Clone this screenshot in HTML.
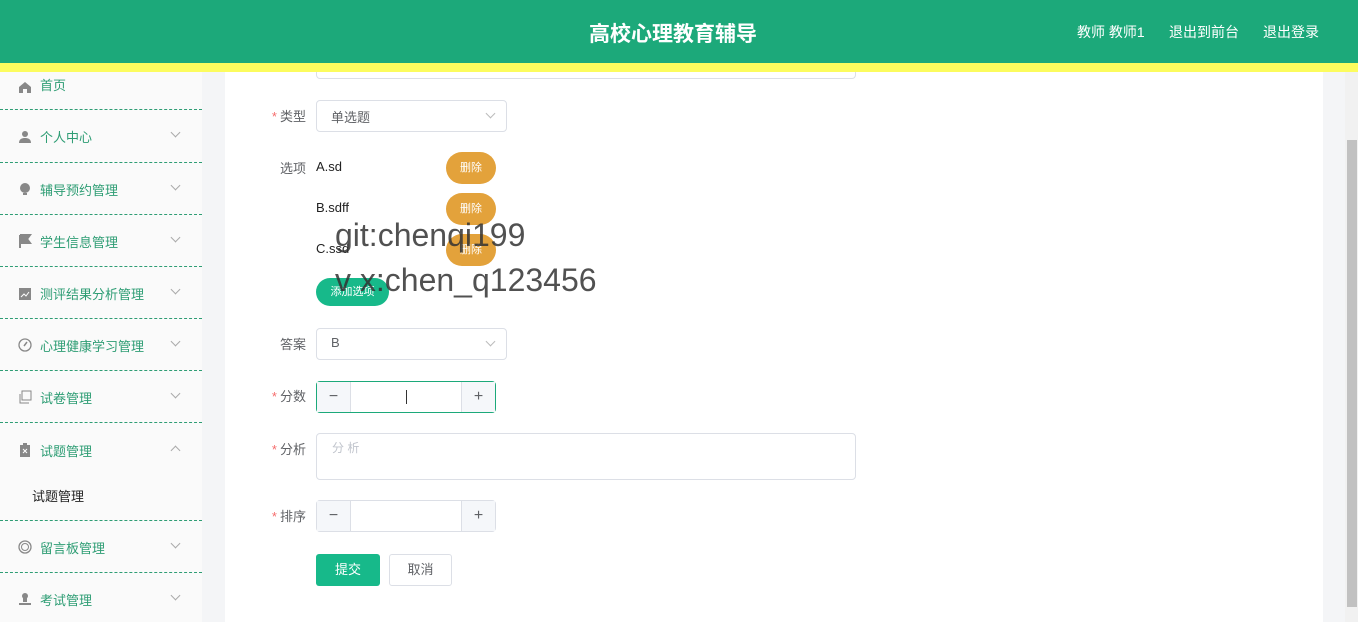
<!DOCTYPE html>
<html><head><meta charset="utf-8"><style>
*{margin:0;padding:0;box-sizing:border-box}
body{width:1358px;height:622px;overflow:hidden;position:relative;font-family:"Liberation Sans","Noto Sans CJK SC",sans-serif;background:#f4f5f7;font-size:13px}
.hdr{position:absolute;left:0;top:0;width:1358px;height:63px;background:#1ca97a}
.yl{position:absolute;left:0;top:63px;width:1358px;height:9px;background:#fcfc5e}
.title{position:absolute;left:-6px;width:1358px;top:18px;text-align:center;color:#fff;font-size:21px;font-weight:bold}
.hr{position:absolute;top:22px;color:#fff;font-size:14px}
.side{position:absolute;left:0;top:72px;width:202px;height:550px;background:#fafafa}
.it{position:absolute;left:0;width:202px;color:#2e9d74;font-size:13px}
.it .ic{position:absolute;left:18px;width:14px;height:14px}
.it .tx{position:absolute;left:40px}
.it .ar{position:absolute;left:172px;width:7px;height:7px;border-right:1px solid #aaa;border-bottom:1px solid #aaa;transform:rotate(45deg)}
.dl{position:absolute;left:0;width:202px;border-top:1px dashed #2e9d74}
.main{position:absolute;left:225px;top:72px;width:1098px;height:550px;background:#fff}
.sb{position:absolute;left:1345px;top:72px;width:13px;height:550px;background:#f1f1f1}
.th{position:absolute;left:1347px;top:140px;width:10px;height:467px;background:#c1c1c1}
.lb{position:absolute;color:#606266;font-size:13px;text-align:right;width:60px}
.lb b{color:#f56c6c;font-weight:normal;margin-right:3px}
.box{position:absolute;border:1px solid #dcdfe6;border-radius:4px;background:#fff;color:#606266}
.btn{position:absolute;border-radius:16px;color:#fff;font-size:11px;text-align:center}
.wm{position:absolute;color:#333;font-size:32px;opacity:.85}
</style></head><body>
<div class="hdr"></div><div class="yl"></div>
<div class="title">高校心理教育辅导</div>
<div class="hr" style="left:1077px">教师 教师1</div>
<div class="hr" style="left:1169px">退出到前台</div>
<div class="hr" style="left:1263px">退出登录</div>
<div class="side"></div>
<div class="it" style="top:75px"><svg class="ic" style="top:5px" viewBox="0 0 14 14"><path d="M1 7L7 2l6 5v6H9V9H5v4H1z" fill="#888"/></svg><span class="tx">首页</span></div>
<div class="dl" style="top:109px"></div>
<div class="it" style="top:127px"><svg class="ic" style="top:3px" viewBox="0 0 14 14"><circle cx="7" cy="4" r="3" fill="#888"/><path d="M1 13c0-4 3-5 6-5s6 1 6 5z" fill="#888"/></svg><span class="tx">个人中心</span><span class="ar" style="top:2px"></span></div>
<div class="dl" style="top:162px"></div>
<div class="it" style="top:180px"><svg class="ic" style="top:2px" viewBox="0 0 14 14"><circle cx="7" cy="6" r="5" fill="#888"/><rect x="5" y="11" width="4" height="2" fill="#888"/></svg><span class="tx">辅导预约管理</span><span class="ar" style="top:2px"></span></div>
<div class="dl" style="top:214px"></div>
<div class="it" style="top:232px"><svg class="ic" style="top:2px" viewBox="0 0 14 14"><path d="M2 1v13M2 1h10l-3 4 3 4H2" fill="#888" stroke="#888" stroke-width="2"/></svg><span class="tx">学生信息管理</span><span class="ar" style="top:2px"></span></div>
<div class="dl" style="top:266px"></div>
<div class="it" style="top:284px"><svg class="ic" style="top:3px" viewBox="0 0 14 14"><rect x="1" y="1" width="12" height="12" fill="#888"/><path d="M3 10l3-3 2 2 3-4" stroke="#fff" fill="none"/></svg><span class="tx">测评结果分析管理</span><span class="ar" style="top:2px"></span></div>
<div class="dl" style="top:318px"></div>
<div class="it" style="top:336px"><svg class="ic" style="top:2px" viewBox="0 0 14 14"><circle cx="7" cy="7" r="6" stroke="#888" fill="none" stroke-width="1.3"/><path d="M9 4L6 8" stroke="#888" stroke-width="1.5"/></svg><span class="tx">心理健康学习管理</span><span class="ar" style="top:2px"></span></div>
<div class="dl" style="top:370px"></div>
<div class="it" style="top:388px"><svg class="ic" style="top:2px" viewBox="0 0 14 14"><rect x="4" y="1" width="9" height="9" stroke="#888" fill="none"/><path d="M2 4v9h9" stroke="#888" fill="none"/></svg><span class="tx">试卷管理</span><span class="ar" style="top:2px"></span></div>
<div class="dl" style="top:422px"></div>
<div class="it" style="top:441px"><svg class="ic" style="top:2px" viewBox="0 0 14 14"><rect x="2" y="2" width="10" height="12" fill="#888"/><rect x="5" y="0" width="4" height="3" fill="#888"/><path d="M5 6l4 4M9 6l-4 4" stroke="#fff"/></svg><span class="tx">试题管理</span><span class="ar" style="top:6px;transform:rotate(225deg)"></span></div>
<div style="position:absolute;left:32px;top:486px;color:#222;font-size:13px">试题管理</div>
<div class="dl" style="top:520px"></div>
<div class="it" style="top:538px"><svg class="ic" style="top:2px" viewBox="0 0 14 14"><circle cx="7" cy="7" r="6" stroke="#888" fill="none" stroke-width="1.3"/><circle cx="7" cy="7" r="3.5" stroke="#888" fill="none"/></svg><span class="tx">留言板管理</span><span class="ar" style="top:2px"></span></div>
<div class="dl" style="top:572px"></div>
<div class="it" style="top:590px"><svg class="ic" style="top:2px" viewBox="0 0 14 14"><circle cx="7" cy="4" r="3" fill="#888"/><rect x="5" y="6" width="4" height="4" fill="#888"/><rect x="1" y="11" width="12" height="2" fill="#888"/></svg><span class="tx">考试管理</span><span class="ar" style="top:2px"></span></div>
<div class="main"></div>
<div class="sb"></div><div class="th"></div>
<div class="box" style="left:316px;top:72px;width:540px;height:7px;border-top:none;border-radius:0 0 4px 4px"></div>
<div class="lb" style="left:246px;top:106px"><b>*</b>类型</div>
<div class="box" style="left:316px;top:100px;width:191px;height:32px;padding:6px 14px">单选题<span style="position:absolute;right:12px;top:9px;width:7px;height:7px;border-right:1px solid #bbb;border-bottom:1px solid #bbb;transform:rotate(45deg)"></span></div>
<div class="lb" style="left:246px;top:158px">选项</div>
<div style="position:absolute;left:316px;top:159px;color:#222">A.sd</div>
<div style="position:absolute;left:316px;top:200px;color:#222">B.sdff</div>
<div style="position:absolute;left:316px;top:241px;color:#222">C.ssd</div>
<div class="btn" style="left:446px;top:152px;width:50px;height:32px;line-height:32px;background:#e3a23b">删除</div>
<div class="btn" style="left:446px;top:193px;width:50px;height:32px;line-height:32px;background:#e3a23b">删除</div>
<div class="btn" style="left:446px;top:234px;width:50px;height:32px;line-height:32px;background:#e3a23b">删除</div>
<div class="btn" style="left:316px;top:278px;width:73px;height:28px;line-height:28px;background:#17b98a">添加选项</div>
<div class="wm" style="left:335px;top:217px">git:chenqi199</div>
<div class="wm" style="left:335px;top:262px">v x:chen_q123456</div>
<div class="lb" style="left:246px;top:334px">答案</div>
<div class="box" style="left:316px;top:328px;width:191px;height:32px;padding:6px 14px">B<span style="position:absolute;right:12px;top:9px;width:7px;height:7px;border-right:1px solid #bbb;border-bottom:1px solid #bbb;transform:rotate(45deg)"></span></div>
<div class="lb" style="left:246px;top:386px"><b>*</b>分数</div>
<div class="box" style="left:316px;top:381px;width:180px;height:32px;border-color:#1ca97a"><div style="position:absolute;left:0;top:0;width:34px;height:30px;background:#f5f7fa;border-right:1px solid #dcdfe6;text-align:center;line-height:30px;font-size:16px">−</div><div style="position:absolute;right:0;top:0;width:34px;height:30px;background:#f5f7fa;border-left:1px solid #dcdfe6;text-align:center;line-height:30px;font-size:16px">+</div><div style="position:absolute;left:89px;top:8px;width:1px;height:14px;background:#333"></div></div>
<div class="lb" style="left:246px;top:439px"><b>*</b>分析</div>
<div class="box" style="left:316px;top:433px;width:540px;height:47px;padding:5px 15px;color:#c0c4cc;font-size:12px">分 析</div>
<div class="lb" style="left:246px;top:506px"><b>*</b>排序</div>
<div class="box" style="left:316px;top:500px;width:180px;height:32px"><div style="position:absolute;left:0;top:0;width:34px;height:30px;background:#f5f7fa;border-right:1px solid #dcdfe6;text-align:center;line-height:30px;font-size:16px">−</div><div style="position:absolute;right:0;top:0;width:34px;height:30px;background:#f5f7fa;border-left:1px solid #dcdfe6;text-align:center;line-height:30px;font-size:16px">+</div></div>
<div style="position:absolute;left:316px;top:554px;width:64px;height:32px;line-height:32px;border-radius:3px;background:#17b98a;color:#fff;text-align:center">提交</div>
<div style="position:absolute;left:389px;top:554px;width:63px;height:32px;line-height:30px;border-radius:3px;border:1px solid #dcdfe6;color:#606266;text-align:center;background:#fff">取消</div>
</body></html>
